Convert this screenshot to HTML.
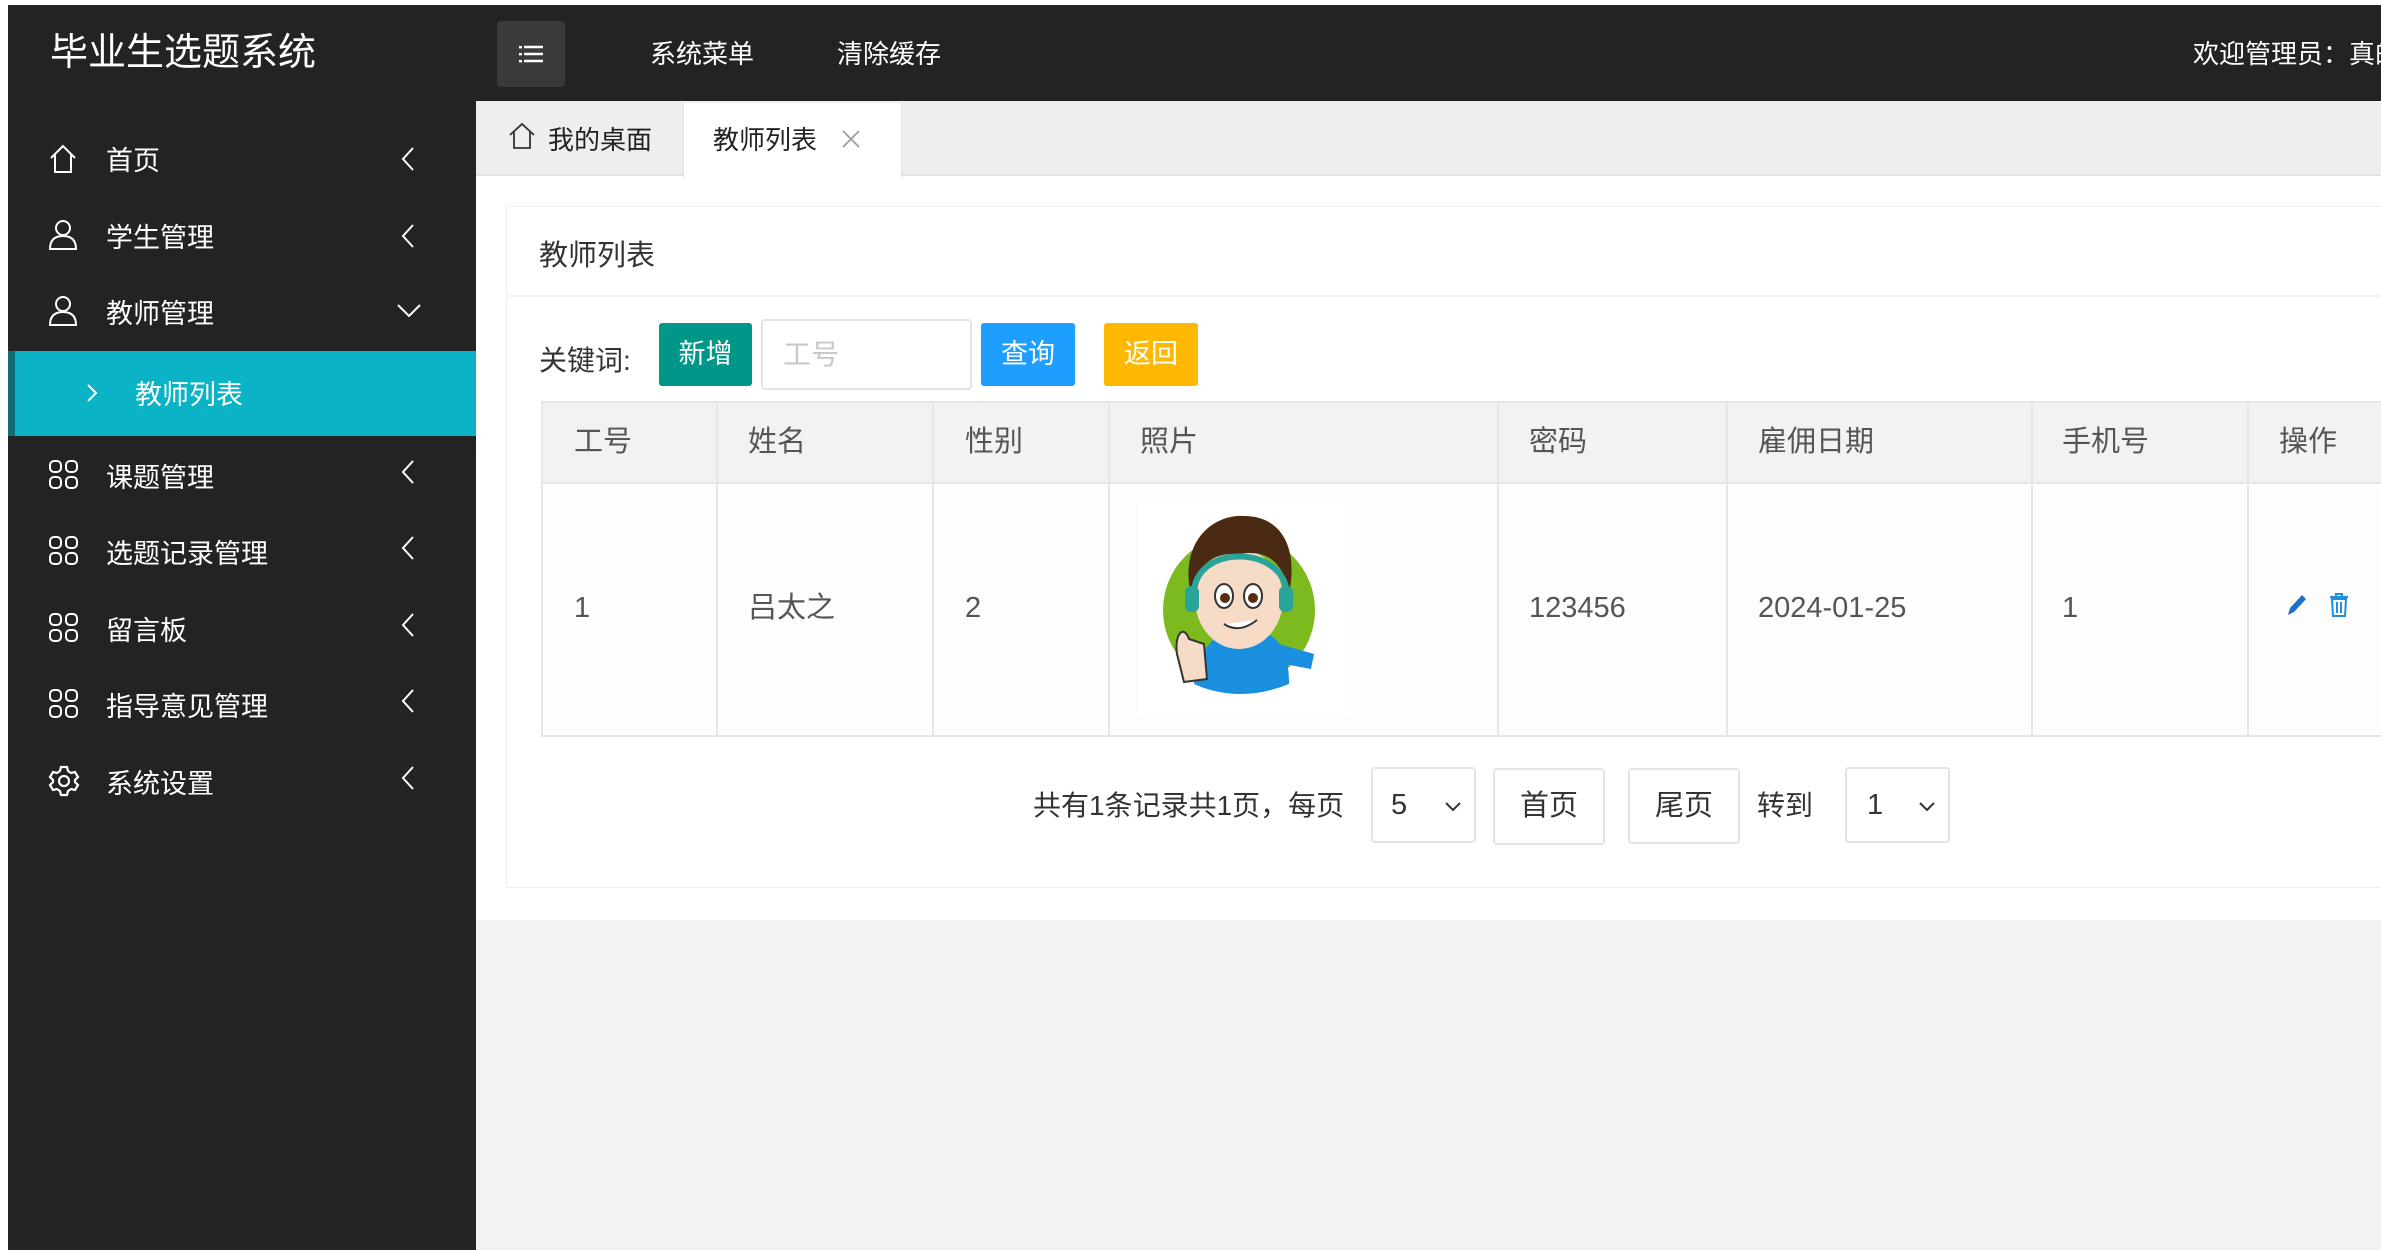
<!DOCTYPE html>
<html><head><meta charset="utf-8"><style>
*{margin:0;padding:0;box-sizing:border-box}
body{width:2381px;height:1250px;position:relative;background:#fff;overflow:hidden;font-family:"Liberation Sans","Noto Sans CJK SC",sans-serif;color:#333}
.a{position:absolute;white-space:nowrap}
.side{left:8px;top:5px;width:468px;height:1245px;background:#232323}
.head{left:8px;top:5px;width:2373px;height:96px;background:#232323}
.logo{left:50px;top:26px;font-size:38px;color:#fff;line-height:54px}
.ham{left:497px;top:21px;width:68px;height:66px;background:#3a3a3a;border-radius:4px}
.ht{color:#fff;font-size:26px;line-height:34px;top:37px}
.mi{left:8px;width:468px;height:76px;color:#fff;font-size:27px}
.mi span{position:absolute;left:98px;top:23px;line-height:36px}
.mi svg{position:absolute}
.tabbar{left:476px;top:101px;width:1905px;height:75px;background:#eeeeef;border-bottom:2px solid #e2e2e2}
.th{position:absolute;top:0;height:483px}
.cell{position:absolute;font-size:29px;color:#555;line-height:36px;white-space:nowrap}
.btn{position:absolute;color:#fff;font-size:27px;text-align:center;line-height:63px;border-radius:3px}
.box{position:absolute;border:2px solid #e4e4e4;border-radius:4px;background:#fff;font-size:29px;color:#333}
</style></head><body>
<div class="a head"></div>
<div class="a side"></div>
<div class="a logo">毕业生选题系统</div>
<div class="a ham"><svg width="68" height="66"><g stroke="#fff" stroke-width="2.4"><line x1="27" y1="26" x2="46" y2="26"/><line x1="27" y1="33" x2="46" y2="33"/><line x1="27" y1="40" x2="46" y2="40"/></g><g fill="#fff"><rect x="22" y="25" width="3" height="2.4"/><rect x="22" y="32" width="3" height="2.4"/><rect x="22" y="39" width="3" height="2.4"/></g></svg></div>
<div class="a ht" style="left:650px">系统菜单</div>
<div class="a ht" style="left:837px">清除缓存</div>
<div class="a ht" style="left:2193px">欢迎管理员：真的</div>

<div class="a mi" style="top:120px"><svg style="left:40px;top:24px" width="30" height="30" fill="none" stroke="#fff" stroke-width="2"><path d="M3 14 L15 2 L27 14 M7 11 V28 H23 V11"/></svg><span>首页</span><svg style="left:392px;top:26px" width="16" height="26" fill="none" stroke="#fff" stroke-width="2"><path d="M13 2 L3 13 L13 24"/></svg></div>
<div class="a mi" style="top:197px"><svg style="left:40px;top:22px" width="30" height="32" fill="none" stroke="#fff" stroke-width="2"><circle cx="15" cy="9" r="7"/><path d="M2 30 C2 20 8 17 15 17 C22 17 28 20 28 30 Z"/></svg><span>学生管理</span><svg style="left:392px;top:26px" width="16" height="26" fill="none" stroke="#fff" stroke-width="2"><path d="M13 2 L3 13 L13 24"/></svg></div>
<div class="a mi" style="top:273px"><svg style="left:40px;top:22px" width="30" height="32" fill="none" stroke="#fff" stroke-width="2"><circle cx="15" cy="9" r="7"/><path d="M2 30 C2 20 8 17 15 17 C22 17 28 20 28 30 Z"/></svg><span>教师管理</span><svg style="left:388px;top:30px" width="26" height="16" fill="none" stroke="#fff" stroke-width="2"><path d="M2 2 L13 13 L24 2"/></svg></div>
<div class="a" style="left:15px;top:351px;width:461px;height:85px;background:#0ab3c5"></div>
<div class="a" style="left:8px;top:351px;width:7px;height:85px;background:#126c76"></div>
<div class="a" style="left:86px;top:383px"><svg width="12" height="20" fill="none" stroke="#fff" stroke-width="2"><path d="M2 2 L10 10 L2 18"/></svg></div>
<div class="a" style="left:135px;top:377px;color:#fff;font-size:27px;line-height:36px">教师列表</div>
<div class="a mi" style="top:437px"><svg style="left:40px;top:22px" width="32" height="32" fill="none" stroke="#fff" stroke-width="2"><rect x="2" y="2" width="11" height="11" rx="4"/><rect x="18" y="2" width="11" height="11" rx="4"/><rect x="2" y="18" width="11" height="11" rx="4"/><rect x="18" y="18" width="11" height="11" rx="4"/></svg><span>课题管理</span><svg style="left:392px;top:22px" width="16" height="26" fill="none" stroke="#fff" stroke-width="2"><path d="M13 2 L3 13 L13 24"/></svg></div>
<div class="a mi" style="top:513px"><svg style="left:40px;top:22px" width="32" height="32" fill="none" stroke="#fff" stroke-width="2"><rect x="2" y="2" width="11" height="11" rx="4"/><rect x="18" y="2" width="11" height="11" rx="4"/><rect x="2" y="18" width="11" height="11" rx="4"/><rect x="18" y="18" width="11" height="11" rx="4"/></svg><span>选题记录管理</span><svg style="left:392px;top:22px" width="16" height="26" fill="none" stroke="#fff" stroke-width="2"><path d="M13 2 L3 13 L13 24"/></svg></div>
<div class="a mi" style="top:590px"><svg style="left:40px;top:22px" width="32" height="32" fill="none" stroke="#fff" stroke-width="2"><rect x="2" y="2" width="11" height="11" rx="4"/><rect x="18" y="2" width="11" height="11" rx="4"/><rect x="2" y="18" width="11" height="11" rx="4"/><rect x="18" y="18" width="11" height="11" rx="4"/></svg><span>留言板</span><svg style="left:392px;top:22px" width="16" height="26" fill="none" stroke="#fff" stroke-width="2"><path d="M13 2 L3 13 L13 24"/></svg></div>
<div class="a mi" style="top:666px"><svg style="left:40px;top:22px" width="32" height="32" fill="none" stroke="#fff" stroke-width="2"><rect x="2" y="2" width="11" height="11" rx="4"/><rect x="18" y="2" width="11" height="11" rx="4"/><rect x="2" y="18" width="11" height="11" rx="4"/><rect x="18" y="18" width="11" height="11" rx="4"/></svg><span>指导意见管理</span><svg style="left:392px;top:22px" width="16" height="26" fill="none" stroke="#fff" stroke-width="2"><path d="M13 2 L3 13 L13 24"/></svg></div>
<div class="a mi" style="top:743px"><svg style="left:40px;top:22px" width="32" height="32" fill="none" stroke="#fff" stroke-width="2.2"><path d="M13 2h6l1 4 3 2 4-1 3 5-3 3v2l3 3-3 5-4-1-3 2-1 4h-6l-1-4-3-2-4 1-3-5 3-3v-2l-3-3 3-5 4 1 3-2z"/><circle cx="16" cy="16" r="5"/></svg><span>系统设置</span><svg style="left:392px;top:22px" width="16" height="26" fill="none" stroke="#fff" stroke-width="2"><path d="M13 2 L3 13 L13 24"/></svg></div>

<div class="a tabbar"></div>
<div class="a" style="left:508px;top:122px"><svg width="28" height="28" fill="none" stroke="#333" stroke-width="1.8"><path d="M2 13 L14 2 L26 13 M6 10 V26 H22 V10"/></svg></div>
<div class="a" style="left:548px;top:122px;font-size:26px;line-height:36px;color:#222">我的桌面</div>
<div class="a" style="left:683px;top:103px;width:219px;height:75px;background:#fff;border-left:1px solid #e2e2e2;border-right:1px solid #e2e2e2"></div>
<div class="a" style="left:713px;top:122px;font-size:26px;line-height:36px;color:#222">教师列表</div>
<div class="a" style="left:841px;top:129px"><svg width="20" height="20" stroke="#999" stroke-width="1.6"><path d="M2 2 L18 18 M18 2 L2 18"/></svg></div>

<div class="a" style="left:476px;top:920px;width:1905px;height:330px;background:#f2f2f2"></div>
<div class="a" style="left:506px;top:206px;width:1875px;height:682px;border:1px solid #f0f0f0;border-right:none"></div>
<div class="a" style="left:506px;top:295px;width:1875px;height:2px;background:#f2f2f2"></div>
<div class="a" style="left:539px;top:236px;font-size:29px;line-height:40px;color:#333">教师列表</div>
<div class="a" style="left:539px;top:342px;font-size:28px;line-height:38px;color:#333">关键词:</div>
<div class="btn" style="left:659px;top:323px;width:93px;background:#009688">新增</div>
<div class="box" style="left:761px;top:319px;width:211px;height:71px;color:#c8c8c8;line-height:67px;padding-left:20px;font-size:28px">工号</div>
<div class="btn" style="left:981px;top:323px;width:94px;background:#1e9fff">查询</div>
<div class="btn" style="left:1104px;top:323px;width:94px;background:#ffb800">返回</div>

<div class="a" style="left:541px;top:401px;width:1840px;height:336px;border:2px solid #e6e6e6;border-right:none;background:#fdfdfd">
<div class="a" style="left:0;top:0;width:1840px;height:81px;background:#f2f2f2;border-bottom:2px solid #e6e6e6"></div>
<div class="th" style="left:173px;border-left:2px solid #e6e6e6;height:334px"></div>
<div class="th" style="left:389px;border-left:2px solid #e6e6e6;height:334px"></div>
<div class="th" style="left:565px;border-left:2px solid #e6e6e6;height:334px"></div>
<div class="th" style="left:954px;border-left:2px solid #e6e6e6;height:334px"></div>
<div class="th" style="left:1183px;border-left:2px solid #e6e6e6;height:334px"></div>
<div class="th" style="left:1488px;border-left:2px solid #e6e6e6;height:334px"></div>
<div class="th" style="left:1704px;border-left:2px solid #e6e6e6;height:334px"></div>
</div>
<div class="cell" style="left:574px;top:424px">工号</div>
<div class="cell" style="left:748px;top:424px">姓名</div>
<div class="cell" style="left:965px;top:424px">性别</div>
<div class="cell" style="left:1140px;top:424px">照片</div>
<div class="cell" style="left:1529px;top:424px">密码</div>
<div class="cell" style="left:1758px;top:424px">雇佣日期</div>
<div class="cell" style="left:2062px;top:424px">手机号</div>
<div class="cell" style="left:2279px;top:424px">操作</div>
<div class="cell" style="left:574px;top:590px">1</div>
<div class="cell" style="left:748px;top:590px">吕太之</div>
<div class="cell" style="left:965px;top:590px">2</div>
<div class="cell" style="left:1529px;top:590px">123456</div>
<div class="cell" style="left:1758px;top:590px">2024-01-25</div>
<div class="cell" style="left:2062px;top:590px">1</div>
<div class="a" style="left:1139px;top:504px;width:212px;height:210px;background:#fff">
<svg width="212" height="210" viewBox="0 0 212 210">
<circle cx="100" cy="106" r="76" fill="#7cba1e"/>
<path d="M55 180 C60 140 80 125 105 125 C135 125 150 140 150 180 Q100 200 55 180Z" fill="#1a8fe0"/>
<path d="M140 140 L175 150 L172 165 L145 160Z" fill="#1a8fe0"/>
<ellipse cx="100" cy="95" rx="44" ry="50" fill="#f6dcc7"/>
<path d="M50 80 C45 30 80 10 105 12 C140 12 160 40 150 90 C145 60 130 45 100 50 C70 48 55 65 52 95Z" fill="#4a2a12"/>
<path d="M55 90 C55 40 145 40 148 90" fill="none" stroke="#2aa39a" stroke-width="6"/>
<rect x="46" y="82" width="14" height="26" rx="6" fill="#2aa39a"/><rect x="140" y="82" width="14" height="26" rx="6" fill="#2aa39a"/>
<ellipse cx="85" cy="92" rx="9" ry="12" fill="#fff" stroke="#333" stroke-width="2"/><circle cx="86" cy="94" r="5" fill="#5a2a10"/>
<ellipse cx="114" cy="92" rx="9" ry="12" fill="#fff" stroke="#333" stroke-width="2"/><circle cx="114" cy="94" r="5" fill="#5a2a10"/>
<path d="M85 120 Q100 130 118 116" fill="#fff" stroke="#333" stroke-width="2"/>
<path d="M38 150 C35 130 45 120 50 135 L65 140 L68 175 L45 178Z" fill="#f6dcc7" stroke="#333" stroke-width="2"/>
</svg></div>
<div class="a" style="left:2284px;top:593px"><svg width="24" height="26"><path d="M4 22 L6 15 L18 2 L22 6 L10 19Z" fill="#1e6fc8"/></svg></div>
<div class="a" style="left:2328px;top:592px"><svg width="22" height="26" fill="none" stroke="#1e8fe0" stroke-width="2"><path d="M2 5 H20 M8 5 V2 H14 V5 M4 7 H18 L17 24 H5Z M9 10 V21 M13 10 V21"/></svg></div>

<div class="a" style="left:1033px;top:787px;font-size:28px;line-height:38px;color:#333">共有1条记录共1页，每页</div>
<div class="box" style="left:1371px;top:767px;width:105px;height:76px;line-height:72px;padding-left:18px">5<svg style="position:absolute;right:12px;top:32px" width="18" height="12" fill="none" stroke="#333" stroke-width="2"><path d="M2 2 L9 9 L16 2"/></svg></div>
<div class="box" style="left:1493px;top:768px;width:112px;height:77px;line-height:73px;text-align:center">首页</div>
<div class="box" style="left:1628px;top:768px;width:112px;height:76px;line-height:72px;text-align:center">尾页</div>
<div class="a" style="left:1757px;top:787px;font-size:28px;line-height:38px;color:#333">转到</div>
<div class="box" style="left:1845px;top:767px;width:105px;height:76px;line-height:72px;padding-left:20px">1<svg style="position:absolute;right:12px;top:32px" width="18" height="12" fill="none" stroke="#333" stroke-width="2"><path d="M2 2 L9 9 L16 2"/></svg></div>
</body></html>
